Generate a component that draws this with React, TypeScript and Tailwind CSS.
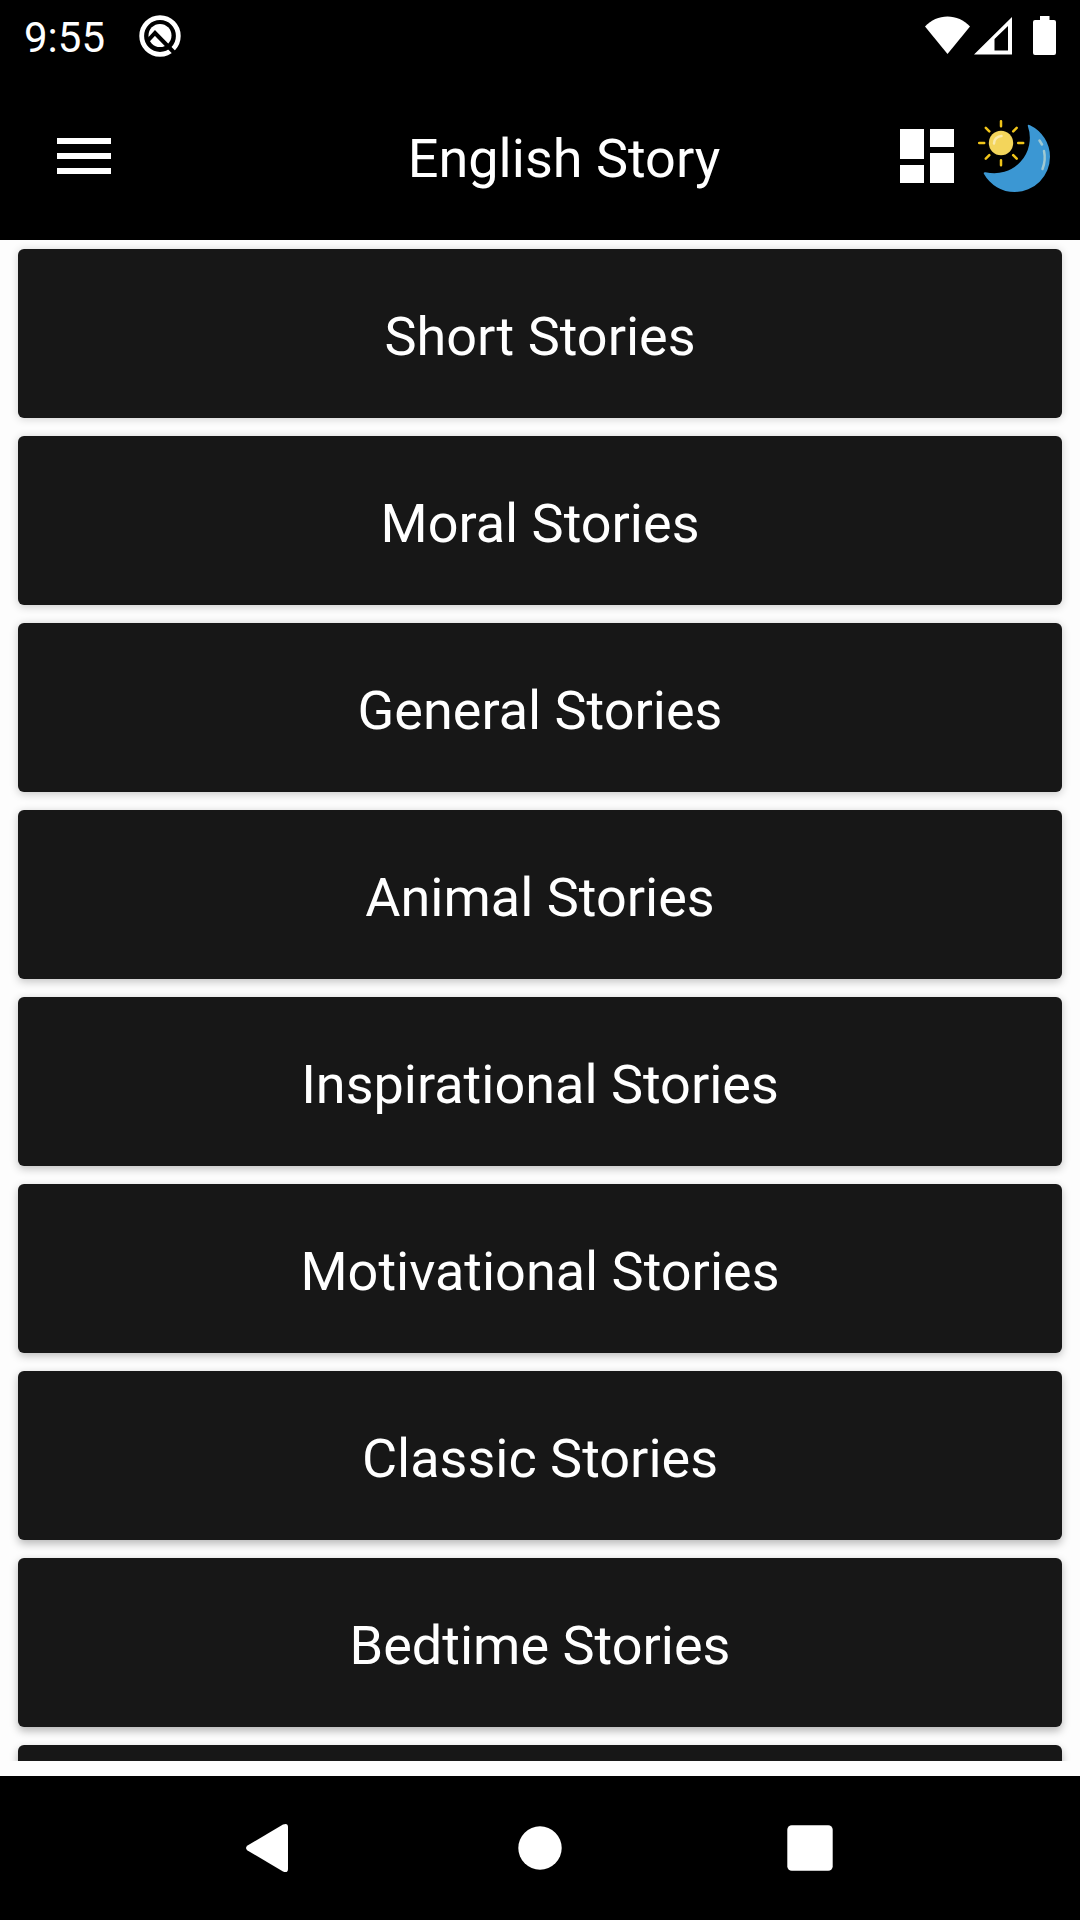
const stories = [
  'Short Stories',
  'Moral Stories',
  'General Stories',
  'Animal Stories',
  'Inspirational Stories',
  'Motivational Stories',
  'Classic Stories',
  'Bedtime Stories',
  '',
];

function StatusBar() {
  return (
    <div className="flex h-[72px] shrink-0 items-center justify-between px-6">
      <div className="flex items-center gap-[34px]">
        <span className="pt-1 text-[42px] leading-[48px]">9:55</span>
        <svg className="h-[42px] w-[42px]" viewBox="0 0 42 42" fill="none">
          <circle cx="21" cy="21" r="18.3" stroke="#fff" strokeWidth="4.8" />
          <circle cx="21" cy="20.5" r="11.5" fill="#fff" />
          <path d="M9 25.5l7-7.500 20.500 21" stroke="#000" strokeWidth="4" />
        </svg>
      </div>
      <div className="flex items-center">
        <svg className="h-[40px] w-[45px]" viewBox="0 0 45 40" fill="#fff">
          <path d="M0 10.5C6 4 14 0.5 22.5 0.5S39 4 45 10.5L22.5 38z" />
        </svg>
        <svg className="ml-1 h-[40px] w-[38px]" viewBox="0 0 38 40" fill="#fff" fillRule="evenodd">
          <path d="M38 1v37.5H0zM34 10L20.5 23V34.500H34z" />
        </svg>
        <svg className="ml-[21px] h-[40px] w-[23px]" viewBox="0 0 23 40" fill="#fff">
          <path d="M7 0h9.5v4H21a2 2 0 0 1 2 2v31a2 2 0 0 1-2 2H2a2 2 0 0 1-2-2V6a2 2 0 0 1 2-2h5z" />
        </svg>
      </div>
    </div>
  );
}

function DayNightIcon() {
  return (
    <svg className="h-[72px] w-[72px]" viewBox="0 0 72 72" fill="none" strokeLinecap="round">
      <path
        d="M49.8 6Q49.5 4 52 5.2A35.3 35.3 0 0 1 72 36.7A35.3 35.3 0 0 1 36.7 72A35.3 35.3 0 0 1 6 54Q5 52 7.5 52.2A35.5 35.5 0 0 0 49.8 6z"
        fill="#3b97d3"
      />
      <path d="M61.5 20.5l2.5 4M66 31q2 9-1.5 18" stroke="#9fc9d3" strokeWidth="2.5" />
      <circle cx="23" cy="23" r="12.2" fill="#f3d55b" />
      <path d="M16 23.5a7.5 7.5 0 0 1 7.5-7.5" stroke="#f9eaad" strokeWidth="2.5" />
      <path
        d="M23 1.2v5M23 40.2v5M1.2 23h5M40.2 23h5M7.8 7.8l3.5 3.5M35.2 35.2l3.5 3.5M7.8 38.7l3.5-3.5M35.2 11.3l3.5-3.5"
        stroke="#f0c419"
        strokeWidth="2.5"
      />
    </svg>
  );
}

function Toolbar() {
  return (
    <header className="flex h-[168px] shrink-0 items-center pl-12 pr-[30px]">
      <button aria-label="Menu" className="h-[72px] w-[72px]">
        <svg viewBox="0 0 24 24" fill="#fff">
          <path d="M3 18h18v-2H3v2zm0-5h18v-2H3v2zm0-7v2h18V6H3z" />
        </svg>
      </button>
      <h1 className="ml-[117px] flex-1 pt-[6px] text-center text-[54px] leading-[64px]">English Story</h1>
      <button aria-label="Dashboard" className="h-[72px] w-[72px]">
        <svg viewBox="0 0 24 24" fill="#fff">
          <path d="M3 13h8V3H3v10zm0 8h8v-6H3v6zm10 0h8V11h-8v10zm0-18v6h8V3h-8z" />
        </svg>
      </button>
      <button aria-label="Toggle dark mode" className="ml-[15px] h-[72px] w-[72px]">
        <DayNightIcon />
      </button>
    </header>
  );
}

function NavBar() {
  return (
    <nav className="flex h-[144px] shrink-0 items-center justify-center gap-[198px]">
      <button aria-label="Back" className="h-[72px] w-[72px]">
        <svg viewBox="0 0 72 72" fill="#fff">
          <path d="M13.5 33.5L49 12.5Q54 10.5 54 15V57Q54 61.5 49 59.5L13.5 38.5Q10.5 36 13.5 33.5z" />
        </svg>
      </button>
      <button aria-label="Home" className="h-[72px] w-[72px]">
        <svg viewBox="0 0 72 72" fill="#fff">
          <circle cx="36" cy="36" r="21.7" />
        </svg>
      </button>
      <button aria-label="Recent apps" className="h-[72px] w-[72px]">
        <svg viewBox="0 0 72 72" fill="#fff">
          <rect x="13.3" y="13.3" width="45.4" height="45.4" rx="4.5" />
        </svg>
      </button>
    </nav>
  );
}

function App() {
  return (
    <div className="flex h-screen flex-col bg-black font-[Roboto,sans-serif] text-white">
      <StatusBar />
      <Toolbar />
      <main className="flex min-h-0 flex-1 flex-col bg-[#fdfdfd] pb-[15px]">
        <div className="flex flex-1 flex-col gap-[18px] overflow-y-auto px-[18px] pt-[9px] [scrollbar-width:none]">
          {stories.map((title, i) => (
            <button
              key={i}
              className="h-[169px] w-full shrink-0 rounded-[6px] bg-[#171717] pt-[6px] text-[54px] leading-[64px]"
              style={{ boxShadow: `0 ${1 + i * 0.4}px 8px rgba(0,0,0,${0.18 + i * 0.015})` }}
            >
              {title}
            </button>
          ))}
        </div>
      </main>
      <NavBar />
    </div>
  );
}

export default App;
